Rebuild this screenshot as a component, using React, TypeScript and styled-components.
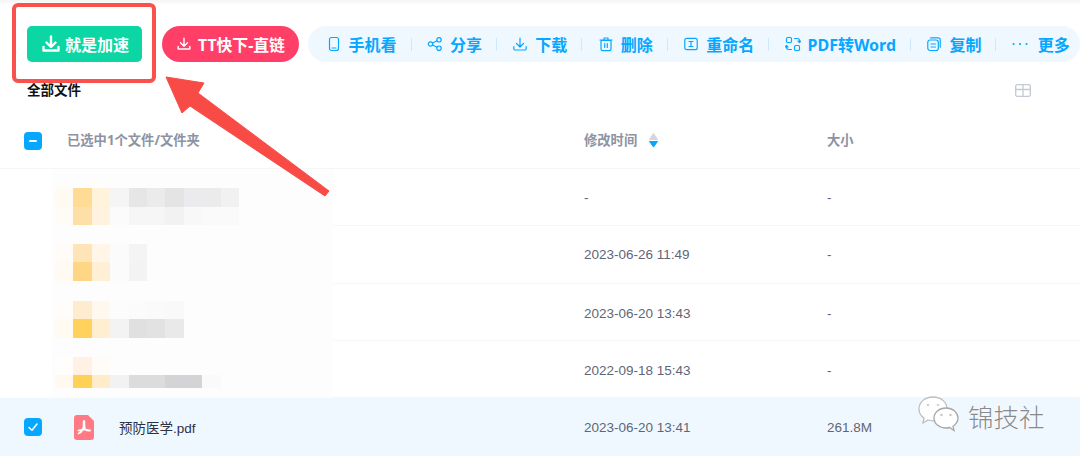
import React from 'react';
import styled, { createGlobalStyle } from 'styled-components';

const blue = '#06a7ff';
const fontStack = '"Noto Sans", "Noto Sans CJK SC", sans-serif';
const dataFont = '"Liberation Sans", "Noto Sans CJK SC", sans-serif';

const GlobalStyle = createGlobalStyle`
  html, body {
    margin: 0;
    padding: 0;
    background: #fff;
  }
`;

const Page = styled.div`
  position: relative;
  width: 1080px;
  height: 464px;
  overflow: hidden;
  background: #fff;
  font-family: ${fontStack};
`;

const TopShade = styled.div`
  height: 5px;
  margin-bottom: 21px;
  background: linear-gradient(#f4f4f4, #fff);
`;

const Toolbar = styled.div`
  display: flex;
  align-items: stretch;
  height: 36px;
  padding-left: 27px;
`;

const SpeedButton = styled.div`
  display: flex;
  align-items: center;
  gap: 5px;
  width: 115px;
  padding-left: 15px;
  box-sizing: border-box;
  margin-right: 20px;
  border-radius: 5px;
  background: #0bd6a4;
  color: #fff;
  font-size: 16px;
  font-weight: 700;
`;

const DirectButton = styled.div`
  display: flex;
  align-items: center;
  gap: 7px;
  width: 137px;
  padding-left: 15px;
  box-sizing: border-box;
  margin-right: 9px;
  border-radius: 18px;
  background: #ff3f68;
  color: #fff;
  font-size: 15.8px;
  font-weight: 700;
  white-space: nowrap;
`;

const ActionPill = styled.div`
  display: flex;
  flex: 1;
  align-items: center;
  padding-left: 17.5px;
  border-radius: 18px;
  background: #f0f8ff;
  color: ${blue};
  font-size: 16px;
  font-weight: 700;
  white-space: nowrap;
`;

const Action = styled.div`
  display: flex;
  align-items: center;
  gap: 7px;
`;

const ActionIcon = styled.svg`
  width: 16px;
  height: 16px;
  fill: none;
  stroke: ${blue};
  stroke-width: 1.2;
  stroke-linecap: round;
  stroke-linejoin: round;
`;

const MoreLabel = styled.span`
  margin-left: 3px;
`;

const Divider = styled.span`
  width: 1px;
  height: 13px;
  margin: 0 15.4px 0 14px;
  background: #cfe8fb;
`;

const CrumbRow = styled.div`
  display: flex;
  align-items: center;
  justify-content: space-between;
  height: 49px;
  padding: 2px 49px 0 27px;
  color: #111;
  font-size: 13.5px;
  font-weight: 700;
`;

const ViewIcon = styled.svg`
  margin-top: 4px;
`;

const HeadRow = styled.div`
  display: grid;
  grid-template-columns: 67px 517px 243px 1fr;
  align-items: center;
  height: 55px;
  border-bottom: 1px solid #f5f6f8;
  color: #8d93a3;
  font-size: 13.3px;
  font-weight: 700;
`;

const HeadLabel = styled.span`
  margin-bottom: 2px;
`;

const CheckBox = styled.span`
  display: flex;
  align-items: center;
  justify-content: center;
  width: 18px;
  height: 18px;
  margin-left: 24px;
  border-radius: 4px;
  background: ${blue};
`;

const Dash = styled.span`
  width: 8px;
  height: 2px;
  border-radius: 1px;
  background: #fff;
`;

const SortLabel = styled.div`
  display: flex;
  align-items: center;
  gap: 12px;
`;

const Row = styled.div<{ $selected?: boolean }>`
  display: flex;
  height: ${p => (p.$selected ? '58px' : '57.25px')};
  background: ${p => (p.$selected ? '#f0f8ff' : 'transparent')};
`;

const NameCell = styled.div`
  width: 281px;
  margin-left: 52px;
  padding-left: 3px;
  box-sizing: border-box;
  background: #fdfdfd;
`;

const Mosaic = styled.div<{ $cols: number; $top: number; $height: number }>`
  display: grid;
  grid-template-columns: repeat(${p => p.$cols}, 18.4px);
  grid-auto-rows: 18.6px;
  width: max-content;
  height: ${p => p.$height}px;
  margin-top: ${p => p.$top}px;
  overflow: hidden;
  filter: blur(0.4px);
`;

const Pixel = styled.span<{ $c: string }>`
  background: ${p => p.$c};
`;

const SelectedName = styled.div`
  display: flex;
  align-items: center;
  width: 333px;
  color: #2d3146;
  font-family: ${dataFont};
  font-size: 13.5px;
`;

const PdfIcon = styled.svg`
  width: 20px;
  height: 25px;
  margin: 0 25px 0 32px;
`;

const Meta = styled.div<{ $line?: boolean; $shift?: number }>`
  display: grid;
  flex: 1;
  grid-template-columns: 251px 243px 1fr;
  align-items: center;
  padding-top: ${p => p.$shift ?? 0}px;
  box-sizing: border-box;
  border-bottom: ${p => (p.$line ? '1px solid #f5f6f8' : 'none')};
  color: #5f6678;
  font-family: ${dataFont};
  font-size: 13.5px;
`;

const MetaValue = styled.span`
  &:first-child {
    grid-column: 2;
  }
`;

const RedFrame = styled.div`
  position: absolute;
  left: 12px;
  top: 3px;
  width: 144px;
  height: 80px;
  box-sizing: border-box;
  border: 4px solid #f9524e;
  border-radius: 6px;
`;

const Arrow = styled.svg`
  position: absolute;
  left: 160px;
  top: 70px;
  width: 175px;
  height: 130px;
`;

const Watermark = styled.div`
  position: absolute;
  left: 918px;
  top: 395px;
  display: flex;
  align-items: center;
  gap: 8px;
  color: #8a8a8a;
  font-size: 25.5px;
  font-weight: 300;
  text-shadow: 0 0 1px #fff;
`;

const files = [
  {
    cols: 10, top: 19, height: 37, shift: 0, time: '-',
    pixels: ['#fffaf2', '#ffdc96', '#fff3dc', '#f5f5f5', '#e6e6e6', '#ebebeb', '#e4e4e4', '#ebebed', '#ebebeb', '#f1f1f1',
      '#fffcf6', '#ffdfa8', '#fff3e0', '#fbfbfb', '#f6f6f6', '#f6f6f6', '#f2f2f2', '#f8f8f8', '#fafafa', '#fafafa'],
  },
  {
    cols: 5, top: 17.5, height: 37, shift: 1, time: '2023-06-26 11:49',
    pixels: ['#fffcf8', '#ffe4b8', '#fff6e8', '#fbfbfb', '#f4f4f4',
      '#fffaf2', '#ffd685', '#fff0d5', '#fbfbfb', '#f3f3f3'],
  },
  {
    cols: 7, top: 17, height: 37, shift: 3, time: '2023-06-20 13:43',
    pixels: ['#fffdf9', '#ffeccf', '#fff8ef', '#fcfcfc', '#fbfbfb', '#fafafa', '#f9f9f9',
      '#fffaf2', '#ffd25e', '#ffeed0', '#f3f3f3', '#e0e0e0', '#e2e2e2', '#e9e9ea'],
  },
  {
    cols: 9, top: 16, height: 31, shift: 3, time: '2022-09-18 15:43',
    pixels: ['#fffefd', '#fff1e3', '#fffcf7', '#fdfdfd', '#fdfdfd', '#fdfdfd', '#fdfdfd', '#fdfdfd', '#fdfdfd',
      '#fff9f0', '#ffd156', '#ffeccb', '#f2f2f2', '#dcdcdc', '#dcdcdc', '#d4d4d6', '#d4d4d6', '#fafafa'],
  },
];

const actions: { label: string; icon: React.ReactNode }[] = [
  {
    label: '手机看',
    icon: <><rect x="3.5" y="1.5" width="9" height="13" rx="2" /><path d="M6 12h4" /></>,
  },
  {
    label: '分享',
    icon: <><circle cx="3.5" cy="8" r="2.2" /><circle cx="12" cy="3.8" r="2.2" /><circle cx="12" cy="12.2" r="2.2" /><path d="M5.5 7l4.5-2.2M5.5 9l4.5 2.2" /></>,
  },
  {
    label: '下载',
    icon: <><path d="M8 2v8.5M4.5 7.5L8 11l3.5-3.5" /><path d="M1.8 10.5v2a1.5 1.5 0 0 0 1.5 1.5h9.4a1.5 1.5 0 0 0 1.5-1.5v-2" /></>,
  },
  {
    label: '删除',
    icon: <><path d="M3 4.5h10v8.5a1.6 1.6 0 0 1-1.6 1.6H4.600a1.6 1.6 0 0 1-1.6-1.6z" /><path d="M2 4h12M6 4V2h4v2M6.700 7.500v4M9.300 7.500v4" /></>,
  },
  {
    label: '重命名',
    icon: <><rect x="1.800" y="2.300" width="12.400" height="11.400" rx="2" /><path d="M6 5.500h4M6 10.500h4M8 5.500v5" /></>,
  },
  {
    label: 'PDF转Word',
    icon: <><rect x="1.500" y="1.500" width="5" height="5" rx="1.300" /><rect x="9.500" y="9.500" width="5" height="5" rx="1.300" /><path d="M9.500 2.500h3a2 2 0 0 1 2 2v1.500M13 5l1.500 1.500L16 5M6.500 13.500h-3a2 2 0 0 1-2-2V10M3 11L1.500 9.500 0 11" /></>,
  },
  {
    label: '复制',
    icon: <><rect x="1.800" y="4" width="10.500" height="10.500" rx="2.200" /><path d="M4.500 1.800h7.700a2 2 0 0 1 2 2v7.500M5 8h4.500M5 11h4.500" /></>,
  },
];

const DownloadMark = ({ size, width }: { size: number; width: number }) => (
  <svg width={size} height={size} viewBox="0 0 18 18" fill="none" stroke="#fff" strokeWidth={width} strokeLinecap="round" strokeLinejoin="round">
    <path d="M9 1.500v10M4.500 7.500L9 12l4.500-4.500" />
    <path d="M1.500 12v3.500h15V12" />
  </svg>
);

export default function App() {
  return (
    <Page>
      <GlobalStyle />
      <TopShade />
      <Toolbar>
        <SpeedButton><DownloadMark size={18} width={2.4} />就是加速</SpeedButton>
        <DirectButton><DownloadMark size={14} width={1.800} />TT快下-直链</DirectButton>
        <ActionPill>
          {actions.map(a => (
            <React.Fragment key={a.label}>
              <Action>
                <ActionIcon viewBox="0 0 16 16">{a.icon}</ActionIcon>
                {a.label}
              </Action>
              <Divider />
            </React.Fragment>
          ))}
          <Action>
            <ActionIcon viewBox="0 0 16 16">
              <path d="M1.500 8h.1M8 8h.1M14.500 8h.1" strokeWidth="2" />
            </ActionIcon>
            <MoreLabel>更多</MoreLabel>
          </Action>
        </ActionPill>
      </Toolbar>

      <CrumbRow>
        全部文件
        <ViewIcon width="16" height="13" viewBox="0 0 16 13" fill="none" stroke="#c5c9d5" strokeWidth="1.300">
          <rect x="0.700" y="0.700" width="14.600" height="11.600" rx="1.500" />
          <path d="M0.700 5.500h14.600M8 0.700v11.600" />
        </ViewIcon>
      </CrumbRow>

      <HeadRow>
        <CheckBox><Dash /></CheckBox>
        <HeadLabel>已选中1个文件/文件夹</HeadLabel>
        <SortLabel>
          <HeadLabel>修改时间</HeadLabel>
          <svg width="9" height="15" viewBox="0 0 9 15">
            <path d="M4.500 0.500L8.500 6.500H0.500z" fill="#d3d6df" stroke="#d3d6df" strokeLinejoin="round" />
            <path d="M4.500 14L8.500 8.500H0.500z" fill={blue} stroke={blue} strokeLinejoin="round" />
          </svg>
        </SortLabel>
        <HeadLabel>大小</HeadLabel>
      </HeadRow>

      {files.map(f => (
        <Row key={f.time + f.cols}>
          <NameCell>
            <Mosaic $cols={f.cols} $top={f.top} $height={f.height}>
              {f.pixels.map((c, i) => <Pixel key={i} $c={c} />)}
            </Mosaic>
          </NameCell>
          <Meta $line $shift={f.shift}>
            <MetaValue>{f.time}</MetaValue>
            <MetaValue>-</MetaValue>
          </Meta>
        </Row>
      ))}

      <Row $selected>
        <SelectedName>
          <CheckBox>
            <svg width="12" height="12" viewBox="0 0 12 12" fill="none" stroke="#fff" strokeWidth="1.500" strokeLinecap="round" strokeLinejoin="round">
              <path d="M2 6.500L5 9.300 10 3" />
            </svg>
          </CheckBox>
          <PdfIcon viewBox="0 0 20 25">
            <path d="M3 0h11l6 6v16a3 3 0 0 1-3 3H3a3 3 0 0 1-3-3V3a3 3 0 0 1 3-3z" fill="#ff7a85" />
            <path d="M10 6c-1 0 .5 5-1 8-1.200 2.500-3 4-4.500 4.500M10 6c1 0-.5 5 1 8 .8 1.500 3 1.800 5 1.500M4.500 15.500c3-1 7-1.500 11 0" fill="none" stroke="#fff" strokeWidth="1.800" strokeLinecap="round" />
          </PdfIcon>
          预防医学.pdf
        </SelectedName>
        <Meta>
          <MetaValue>2023-06-20 13:41</MetaValue>
          <MetaValue>261.8M</MetaValue>
        </Meta>
      </Row>

      <RedFrame />
      <Arrow viewBox="0 0 175 130">
        <polygon points="6,7 44,13 38,23 169,121 165,126 30,36 22,43" fill="#f84b45" stroke="#f84b45" strokeLinejoin="round" />
      </Arrow>

      <Watermark>
        <svg width="42" height="40" viewBox="0 0 42 40">
          <path d="M15 2C7 2 1 7 1 14c0 4 2 7 5 9l-1 5 5-3c2 .6 3.500.8 5 .8 8 0 14-5.500 14-11.800C29 7 23 2 15 2z" fill="#fff" stroke="#bdbdbd" strokeWidth="1.300" />
          <path d="M28 13c-7 0-12 4.500-12 10s5 10 12 10c1.300 0 2.500-.2 3.600-.5l4.400 3-1-4.300c3-2 5-5 5-8.200 0-5.500-5-10-12-10z" fill="#fff" stroke="#a8a8a8" strokeWidth="1.300" />
          <circle cx="10" cy="10" r="1.300" fill="#d2d2d2" />
          <circle cx="20" cy="10" r="1.300" fill="#d2d2d2" />
          <circle cx="23.500" cy="20" r="1.200" fill="#c4c4c4" />
          <circle cx="32.500" cy="20" r="1.200" fill="#c4c4c4" />
        </svg>
        锦技社
      </Watermark>
    </Page>
  );
}
